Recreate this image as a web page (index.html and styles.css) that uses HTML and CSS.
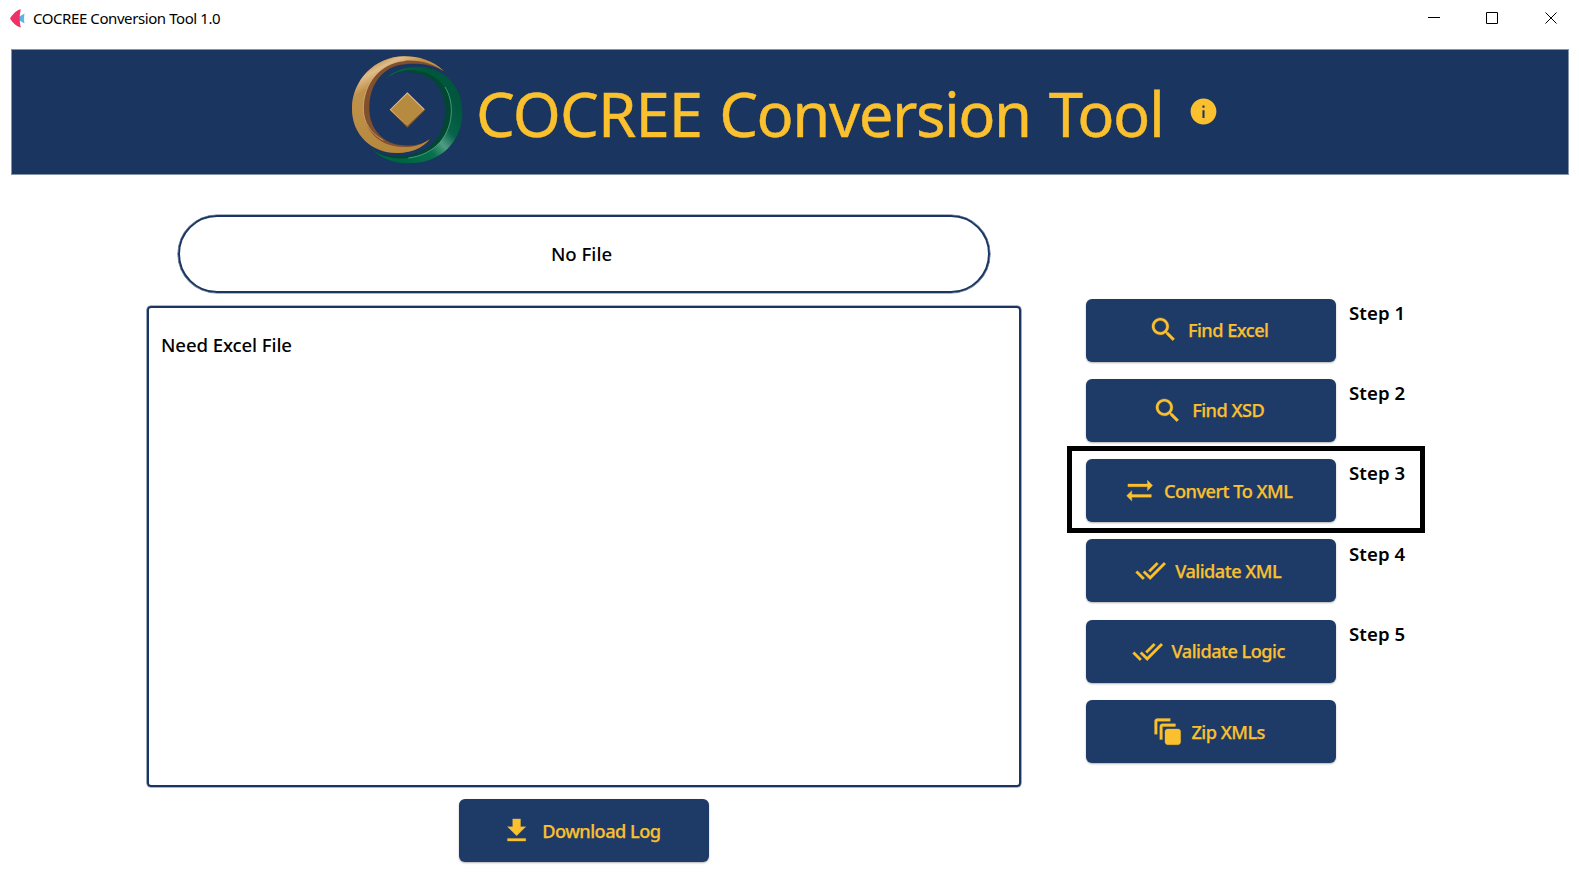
FILE: index.html
```html
<!DOCTYPE html>
<html lang="en">
<head>
<meta charset="utf-8">
<title>COCREE Conversion Tool 1.0</title>
<link rel="stylesheet" href="styles.css">
</head>
<body>
<svg class="defs" aria-hidden="true">
  <symbol id="search" viewBox="0 0 24 24"><path d="M15.5 14h-.79l-.28-.27C15.41 12.59 16 11.11 16 9.5 16 5.91 13.09 3 9.5 3S3 5.91 3 9.5 5.91 16 9.5 16c1.61 0 3.09-.59 4.23-1.57l.27.28v.79l5 4.99L20.49 19l-4.99-5zm-6 0C7.01 14 5 11.99 5 9.5S7.01 5 9.5 5 14 7.01 14 9.5 11.99 14 9.5 14z"/></symbol>
  <symbol id="swap" viewBox="0 0 24 24"><path d="M22 8l-4-4v3H3v2h15v3l4-4zM2 16l4 4v-3h15v-2H6v-3l-4 4z"/></symbol>
  <symbol id="done" viewBox="0 0 24 24"><path d="M18 7l-1.41-1.41-6.34 6.34 1.41 1.41L18 7zm4.24-1.41L11.66 16.17 7.48 12l-1.41 1.41L11.66 19l12-12-1.42-1.41zM.41 13.41L6 19l1.41-1.41L1.83 12 .41 13.41z"/></symbol>
  <symbol id="stack" viewBox="0 0 24 24"><path d="M20 22h-8c-1.100 0-2-.9-2-2v-8c0-1.100.9-2 2-2h8c1.100 0 2 .9 2 2v8c0 1.100-.9 2-2 2zM8 18H6V8c0-1.100.9-2 2-2h10v2H8v10zM4 14H2V4c0-1.100.9-2 2-2h10v2H4v10z"/></symbol>
  <symbol id="download" viewBox="0 0 24 24"><path d="M19 9h-4V3H9v6H5l7 7 7-7zM5 18v2h14v-2H5z"/></symbol>
</svg>

<header class="titlebar">
  <svg class="app-icon" viewBox="0 0 16 20"><path fill="#5bb5e2" d="M6 9.500L14.500 4.500Q13.300 9.500 14.500 14.500z"/><path fill="#ef3167" d="M0 9.500C3 5 6 1.500 10.800 .3Q8.500 9.500 10.800 18.500C6 17.300 3 14 0 9.500z"/></svg>
  <span class="app-name">COCREE Conversion Tool 1.0</span>
  <svg class="controls" viewBox="0 0 130 12"><path d="M0 5.500h12M58.500 .5h11v11h-11zM117.500 .5l11 11M128.500 .5l-11 11"/></svg>
</header>

<section class="banner">
  <svg class="logo" viewBox="30 26 342 336">
    <defs>
      <linearGradient id="gold" x1="0" y1="0" x2="0.500" y2="1"><stop offset="0" stop-color="#b98a3f"/><stop offset=".14" stop-color="#c19450"/><stop offset=".22" stop-color="#dfbd8a"/><stop offset=".34" stop-color="#bf914b"/><stop offset="1" stop-color="#b5873b"/></linearGradient>
      <linearGradient id="green" gradientUnits="userSpaceOnUse" x1="367" y1="200" x2="200" y2="354"><stop offset="0" stop-color="#00573d"/><stop offset=".3" stop-color="#07644a"/><stop offset=".48" stop-color="#4f9d83"/><stop offset=".66" stop-color="#08704e"/><stop offset="1" stop-color="#006444"/></linearGradient>
    </defs>
    <path fill="#004831" d="M133 105C155 80 190 64 230 64C310 64 367 120 367 200C367 290 300 354 210 354C160 354 120 338 93 310C120 328 160 336 195 332C270 325 316 270 316 195C316 125 270 80 200 80C170 80 150 90 133 105Z"/>
    <path fill="url(#green)" d="M133 105C155 80 190 64 230 64C310 64 367 120 367 200C367 290 300 354 210 354C160 354 120 338 93 310C120 332 165 344 205 338C285 328 334 270 334 195C334 125 280 72 210 74C175 75 150 88 133 105Z"/>
    <path fill="none" stroke="#55a487" stroke-width="2.500" d="M205 338C285 328 334 270 334 195C334 170 328 145 315 125"/>
    <path fill="#82502d" d="M312 78C280 45 235 33 193 33C105 33 36 105 36 190C36 268 95 323 172 323C212 323 248 308 270 281C245 298 220 303 192 300C130 298 88 250 88 190C88 115 130 62 195 57C240 52 285 60 312 78Z"/>
    <path fill="url(#gold)" d="M312 78C280 45 235 33 193 33C105 33 36 105 36 190C36 268 95 323 172 323C212 323 248 308 270 281C245 299 220 307 188 305C115 303 70 250 70 190C70 115 120 52 195 46C240 43 280 55 312 78Z"/>
    <path fill="none" stroke="#e2bd84" stroke-width="2" d="M130 285C92 265 70 230 70 190C70 115 120 52 195 46"/>
    <path fill="#89572f" d="M202 141L256 193 202 247 149 193z"/>
    <path fill="#dfb980" d="M202 141L254 192 200 240 149 193z"/>
    <path fill="#b78b3f" d="M202 145L251 193 202 241 153 193z"/>
  </svg>
  <h1><span class="w1">COCREE</span> <span class="w2">Conversion</span> <span class="w3">Tool</span></h1>
  <svg class="info" viewBox="0 0 24 24"><path d="M12 2C6.480 2 2 6.480 2 12s4.480 10 10 10 10-4.480 10-10S17.520 2 12 2zm.8 15h-1.600v-6h1.600v6zm0-8h-1.600V7.400h1.600V9z"/></svg>
</section>

<main>
  <div class="left">
    <div class="file-pill"><span>No File</span></div>
    <div class="log"><span>Need Excel File</span></div>
    <button class="btn b-down"><svg><use href="#download"/></svg><span>Download Log</span></button>
  </div>
  <div class="steps">
    <div class="row"><button class="btn"><svg><use href="#search"/></svg><span>Find Excel</span></button><b>Step 1</b></div>
    <div class="row"><button class="btn"><svg><use href="#search"/></svg><span>Find XSD</span></button><b>Step 2</b></div>
    <div class="row current"><button class="btn"><svg><use href="#swap"/></svg><span>Convert To XML</span></button><b>Step 3</b></div>
    <div class="row"><button class="btn"><svg><use href="#done"/></svg><span>Validate XML</span></button><b>Step 4</b></div>
    <div class="row"><button class="btn"><svg><use href="#done"/></svg><span>Validate Logic</span></button><b>Step 5</b></div>
    <div class="row"><button class="btn"><svg><use href="#stack"/></svg><span>Zip XMLs</span></button></div>
  </div>
</main>
</body>
</html>
```
FILE: styles.css
```css
*, *::after { box-sizing: border-box; }
body {
  margin: 0;
  width: 1579px;
  height: 889px;
  overflow: hidden;
  background: #fff;
  color: #000;
  font-family: "Noto Sans", "Open Sans", sans-serif;
}
svg { display: block; flex: none; }
.defs { display: none; }

.titlebar {
  display: flex;
  height: 49px;
  padding: 8px 21px 0 10px;
}
.app-icon { width: 16px; height: 20px; margin-top: 1px; }
.app-name {
  margin-left: 7px;
  font-size: 15px;
  line-height: 20px;
  letter-spacing: -0.42px;
  white-space: nowrap;
}
.controls {
  width: 130px;
  height: 12px;
  margin: 4px 0 0 auto;
  fill: none;
  stroke: #000;
  stroke-width: 1;
}

.banner {
  display: flex;
  width: 1558px;
  height: 126px;
  margin-left: 11px;
  padding-left: 338px;
  background: #193560;
  border: 1px solid #8492aa;
}
.logo { width: 114px; height: 112px; margin-top: 4px; }
h1 {
  width: 684px;
  margin: 21px 0 0 12px;
  color: #fbc02d;
  font-size: 61.6px;
  font-weight: 400;
  line-height: 84px;
  white-space: nowrap;
  -webkit-text-stroke: 0.4px #fbc02d;
}
.w1 { letter-spacing: -0.9px; margin-right: 1px; }
.w2 { letter-spacing: -1.5px; margin-right: 2px; }
.w3 { letter-spacing: -1.4px; }
.info { width: 31px; height: 31px; margin: 46.4px 0 0 28px; fill: #fbc02d; }

main { display: flex; }
.left {
  display: flex;
  flex-direction: column;
  align-items: center;
  width: 875px;
  margin-left: 146px;
  padding-top: 40px;
  font-size: 18.6px;
  font-weight: 500;
}
.file-pill {
  display: flex;
  align-items: center;
  justify-content: center;
  width: 812px;
  height: 78px;
  padding: 0 4px 2px 0;
  border: 2px solid #193560;
  border-radius: 39px;
  box-shadow: 0 0 0 0.6px #5b7193;
}
.log {
  width: 874px;
  height: 481px;
  margin: 13px 0 0 1px;
  padding: 24px 0 0 12px;
  border: 2px solid #193560;
  border-radius: 4px;
  box-shadow: 0 0 0 0.6px #5b7193;
  letter-spacing: -0.1px;
}
.b-down { margin: 12px 0 0 1px; }

.btn {
  display: flex;
  align-items: center;
  justify-content: center;
  flex: none;
  width: 250px;
  height: 63px;
  padding: 0 6px 0 0;
  border: 0;
  border-radius: 6px;
  background: #1e3b68;
  box-shadow: 0 1px 2px rgba(0, 0, 0, .3);
  color: #fbc02d;
  font: 500 18.2px/26px "Noto Sans", "Open Sans", sans-serif;
  letter-spacing: -0.53px;
  white-space: nowrap;
  -webkit-text-stroke: 0.25px #fbc02d;
}
.btn svg {
  width: 31.25px;
  height: 31.25px;
  margin-right: 8.5px;
  fill: #fbc02d;
  stroke: #fbc02d;
  stroke-width: 0.25;
}
.b-down svg { margin-right: 9.5px; }

.steps {
  display: flex;
  flex-direction: column;
  gap: 17.3px;
  margin: 123.6px 0 0 65.3px;
}
.row { position: relative; display: flex; gap: 12.7px; height: 63px; }
.row b {
  font-size: 18.6px;
  font-weight: 600;
  line-height: 26px;
  padding-top: 1.3px;
  letter-spacing: 0.08px;
}
.current::after {
  content: "";
  position: absolute;
  left: -19px;
  top: -13px;
  width: 358px;
  height: 87px;
  border: 5px solid #000;
}
```
